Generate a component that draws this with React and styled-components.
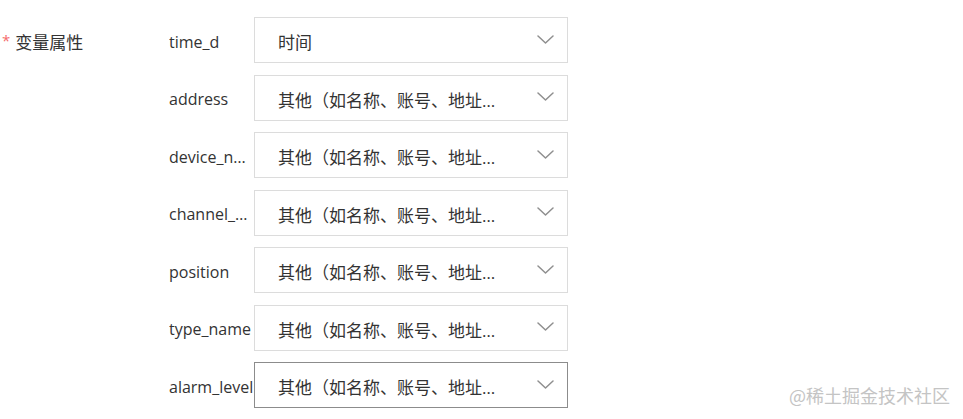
import React from "react";
import styled, { createGlobalStyle } from "styled-components";

const GlobalStyle = createGlobalStyle`
  html, body {
    margin: 0;
    padding: 0;
    background: #fff;
  }
  body {
    font-family: "Open Sans", "Noto Sans CJK SC", sans-serif;
    color: #333;
  }
`;

const Page = styled.div`
  position: relative;
  width: 963px;
  height: 419px;
  overflow: hidden;
  padding-top: 17px;
  box-sizing: border-box;
`;

const FormItem = styled.div`
  display: flex;
  align-items: flex-start;
`;

const ItemLabel = styled.div`
  width: 169px;
  flex-shrink: 0;
  height: 46px;
  display: flex;
  align-items: center;
  padding-left: 2px;
  padding-top: 3px;
  box-sizing: border-box;
  font-size: 17px;
  color: #333;
`;

const Required = styled.span`
  color: #f56c6c;
  font-size: 15px;
  margin-right: 5px;
  position: relative;
  top: -2px;
`;

const Fields = styled.div`
  display: flex;
  flex-direction: column;
  gap: 11.5px;
`;

const FieldRow = styled.div`
  display: flex;
  align-items: center;
`;

const FieldName = styled.div`
  width: 85px;
  flex-shrink: 0;
  font-size: 16px;
  padding-top: 3px;
  color: #333;
  white-space: nowrap;
  overflow: hidden;
  text-overflow: ellipsis;
`;

const Select = styled.div`
  width: 314px;
  height: 46px;
  box-sizing: border-box;
  border: 1px solid ${(p) => (p.$active ? "#8c8c8c" : "#dcdcdc")};
  background: #fff;
  display: flex;
  align-items: center;
  padding: 0 13px 0 23px;
`;

const Value = styled.span`
  flex: 1;
  min-width: 0;
  font-size: 17px;
  padding-top: 3px;
  color: #333;
  white-space: nowrap;
  overflow: hidden;
  text-overflow: ellipsis;
  max-width: 228px;
`;

const Arrow = styled.svg`
  width: 17px;
  height: 9px;
  margin-left: auto;
  margin-bottom: 2px;
  flex-shrink: 0;
`;

const Watermark = styled.div`
  position: absolute;
  right: 13px;
  bottom: 11px;
  font-size: 18px;
  color: #c4c4c4;
  font-family: "Noto Sans CJK SC", sans-serif;
`;

const OTHER = "其他（如名称、账号、地址等）";

const fields = [
  { name: "time_d", value: "时间" },
  { name: "address", value: OTHER },
  { name: "device_name", value: OTHER },
  { name: "channel_name", value: OTHER },
  { name: "position", value: OTHER },
  { name: "type_name", value: OTHER },
  { name: "alarm_level", value: OTHER, active: true },
];

function ChevronDown() {
  return (
    <Arrow viewBox="0 0 17 9" fill="none">
      <polyline
        points="1,1 8.5,8 16,1"
        stroke="#8f8f8f"
        strokeWidth="1.5"
        strokeLinecap="round"
        strokeLinejoin="round"
      />
    </Arrow>
  );
}

export default function App() {
  return (
    <Page>
      <GlobalStyle />
      <FormItem>
        <ItemLabel>
          <Required>*</Required>变量属性
        </ItemLabel>
        <Fields>
          {fields.map((f) => (
            <FieldRow key={f.name}>
              <FieldName>{f.name}</FieldName>
              <Select $active={f.active}>
                <Value>{f.value}</Value>
                <ChevronDown />
              </Select>
            </FieldRow>
          ))}
        </Fields>
      </FormItem>
      <Watermark>@稀土掘金技术社区</Watermark>
    </Page>
  );
}
